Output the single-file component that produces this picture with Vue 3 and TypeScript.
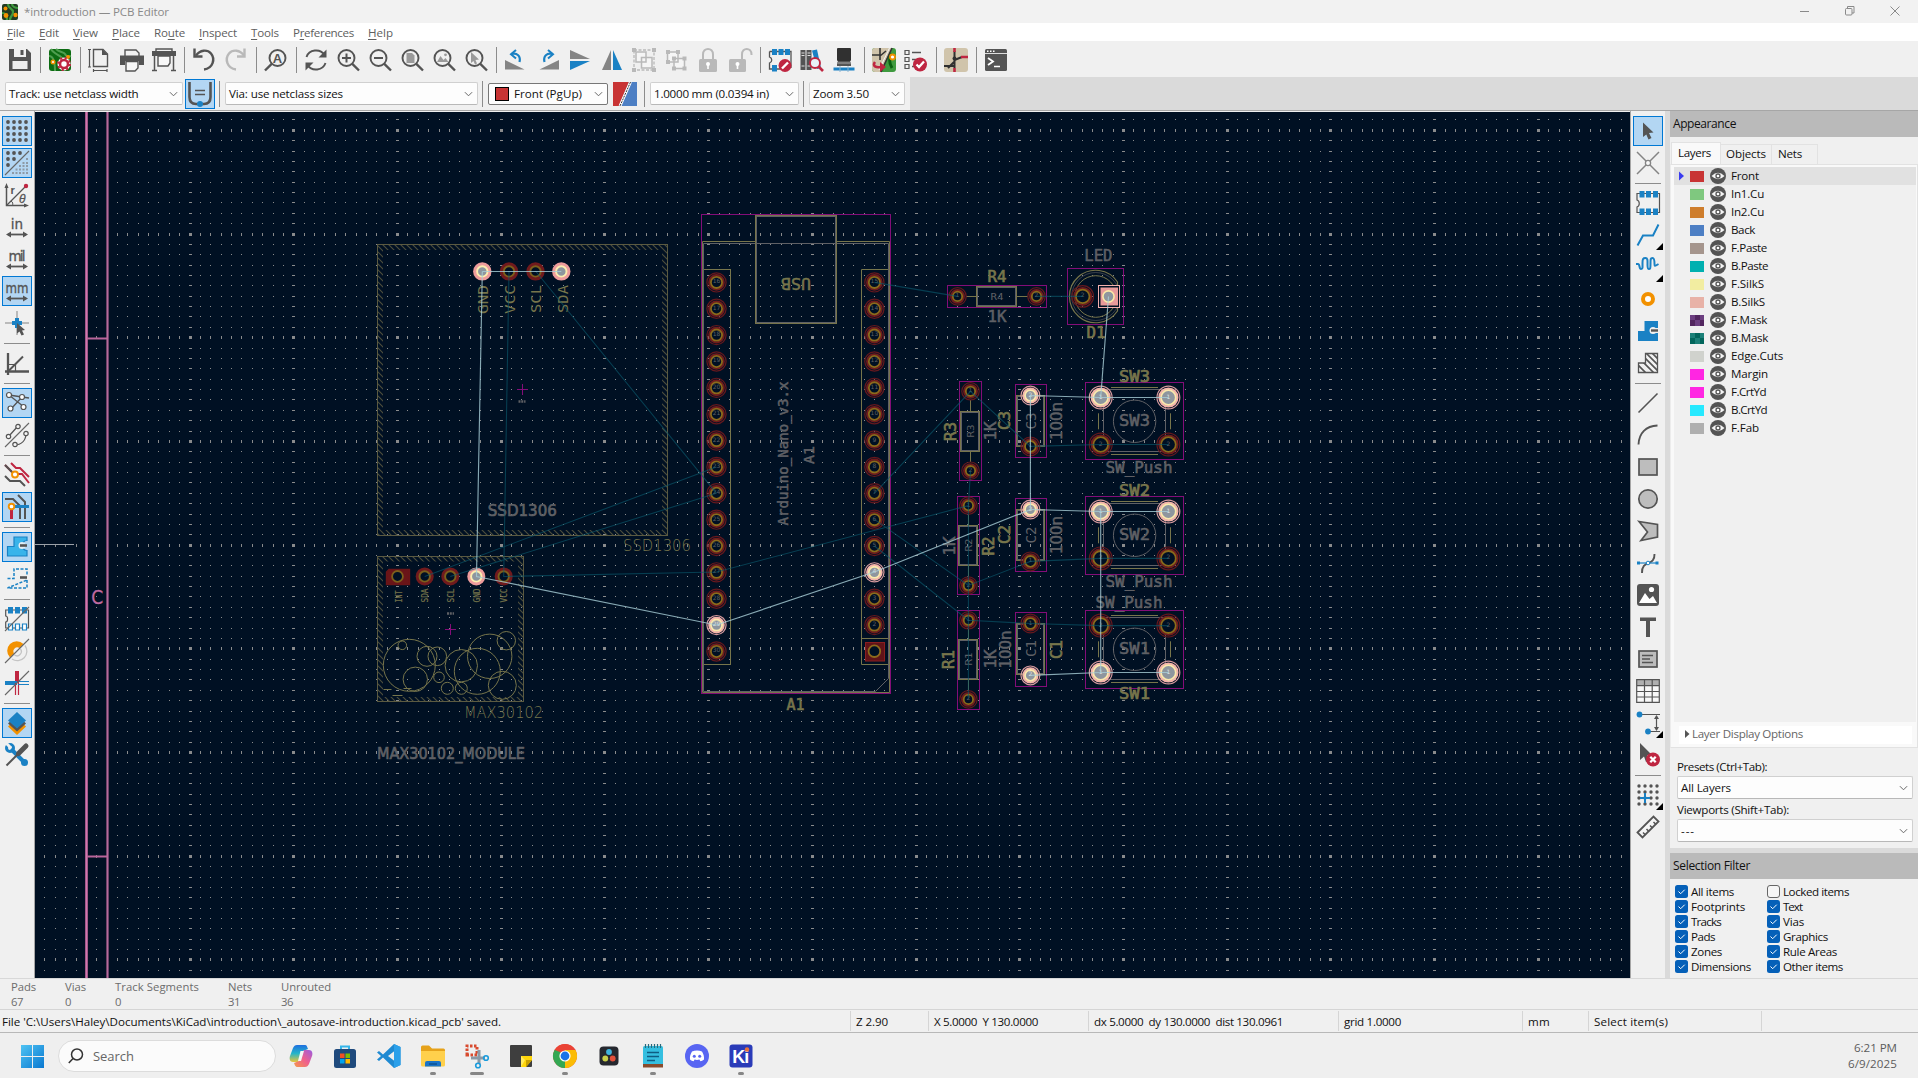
<script setup lang="ts">
import type { Directive } from 'vue'

/* Tracks a label out (or in) so that it fills the given width in pixels. */
const vFit: Directive<HTMLElement, number> = {
  mounted(el, { value }) {
    if (!value) return
    const n = (el.textContent || '').length
    const w = el.getBoundingClientRect().width
    if (n > 1) el.style.letterSpacing = ((value - w) / n).toFixed(3) + 'px'
  },
}

const D = '#545454'
const B = '#1a81c4'
const R = '#bf2641'
const O = '#f29100'
const G = '#b9b9b9'
const ln = (d: string, c = D, w = 2, x = '') => `<path d="${d}" fill="none" stroke="${c}" stroke-width="${w}" ${x}/>`
const fl = (d: string, c = D) => `<path d="${d}" fill="${c}"/>`
const lens = (inner: string) => `<circle cx="10.5" cy="10" r="8" fill="none" stroke="${D}" stroke-width="1.9"/>` + ln('M16.3 15.8L23 22.5', D, 2.4) + inner
const pins = (f: string) => fl('M4 1h5v6h-5zM10.500 1h5v6h-5zM17 1h5v6h-5z', B) + f
const arrowsH = ln('M3 19.500H21', D, 1.800) + fl('M1 19.500l5-3v6zM23 19.500l-5-3v6z')
const slash = ln('M0 24L24 0', '#666', 1.100)

const ic: Record<string, string> = {
  save: fl('M1 1H19L23 5V23H1z') + '<rect x="6" y="1" width="12" height="8" fill="#f0f0f0"/><rect x="12.500" y="2" width="3" height="5" fill="#545454"/><rect x="4.500" y="13" width="15" height="8" fill="#f0f0f0"/>',
  board: '<rect x="1" y="1" width="22" height="22" rx="3" fill="#0c6b12"/>' + ln('M3 1c2 4 8 6 10 8s3 4 9 3M8 1c3 3 8 3 9 5s2 3 6 2M1 8c4 0 6 4 6 15', '#4f9e50', 2) + '<circle cx="5" cy="14" r="2.500" fill="#f29100"/><circle cx="5" cy="14" r="1" fill="#fff"/><circle cx="20" cy="9" r="2" fill="#f29100"/><circle cx="16" cy="16" r="6.500" fill="#fff"/><circle cx="16" cy="16" r="4" fill="none" stroke="#bf2641" stroke-width="2.600"/><circle cx="16" cy="16" r="6" fill="none" stroke="#bf2641" stroke-width="2" stroke-dasharray="2.200 2.500"/>',
  page: ln('M5.500 1.500H15L19.500 6V18.500H5.500z', D, 1.400) + fl('M14 1v6h6z') + ln('M1.500 1.500V19M0 1.500h3M0 19h3M5.500 22.500H19M5.500 21v3M19 21v3', D, 1.200),
  print: ln('M5 9V2H16L19 5V9', D, 1.400, '') + fl('M0 7.500H24V17H19V13H5v4H0z') + '<path d="M6 13.500H18V20l-3 3H6z" fill="#f8f8f8" stroke="#545454" stroke-width="1.400"/>',
  plot: ln('M4 4V1H20V4', D, 1.400) + fl('M0 3H24V8H0z') + ln('M2.500 8V22M21.500 8V22M0 22.500H5M19 22.500h5', D, 1.500) + '<path d="M6 8H18V15l-2 3H6z" fill="#f8f8f8" stroke="#545454" stroke-width="1.400"/>',
  undo: ln('M4 7.500C8 2 15 1 19 5.500C23.500 11 21 20.500 12 21.500', D, 2.400) + ln('M2.500 0.500V8.500H10.500', D, 2.400),
  redo: ln('M20 7.500C16 2 9 1 5 5.500C0.500 11 3 20.500 12 21.500', G, 2.400) + ln('M20.500 0.500V8.500H13', G, 2.400),
  find: '<circle cx="13.500" cy="10" r="8" fill="none" stroke="#545454" stroke-width="1.900"/>' + ln('M7.700 15.800L1 22.500', D, 2.400) + '<text x="13.500" y="14.600" font-size="13" font-weight="bold" text-anchor="middle" font-family="Liberation Sans, sans-serif" fill="#545454">A</text>',
  refresh: ln('M2.500 9C5 1.500 16 0 20.500 7', D, 1.900) + ln('M21.500 15C19 22.500 8 24 3.500 17', D, 1.900) + fl('M22.500 1.500V9.500H14.500zM1.500 22.500V14.500H9.500z'),
  zin: lens(ln('M10.500 5.500V14.500M6 10H15', D, 2)),
  zout: lens(ln('M6 10H15', D, 2)),
  zfit: lens(fl('M6.500 5H12l2.500 2.500V15H6.500z', '#9a9a9a')),
  zobj: lens(fl('M5 14L8.500 8l3 4 2-2 3 4z', '#9a9a9a') + '<circle cx="13.500" cy="6.800" r="1.400" fill="#9a9a9a"/>'),
  zsel: lens(fl('M7 4L15 11.500 11.500 12l1.500 3.500-2 1L9.500 13 7 15z', '#9a9a9a')),
  rccw: fl('M1 12V21.500H20.500z', '#848484') + ln('M7.500 6C13 4.500 17 8 15.500 14', B, 2.200) + ln('M12 2L7 6.300 12 10.500', B, 2),
  rcw: fl('M23 12V21.500H3.500z', '#848484') + ln('M16.500 6C11 4.500 7 8 8.500 14', B, 2.200) + ln('M12 2L17 6.300 12 10.500', B, 2),
  mv: fl('M2 2V11H22z', '#848484') + fl('M2 22V13H22z', B),
  mh: fl('M11 2V22H2z', '#848484') + fl('M13 2V22H22z', B),
  group: ln('M2 2H22V22H2z', G, 1.300, 'stroke-dasharray="3 1.500"') + fl('M0 0h4v4H0zM20 0h4v4h-4zM0 20h4v4H0zM20 20h4v4h-4z', G) + '<path d="M4 4H14V14H4zM9.500 9.500H20V20H9.500z" fill="#f5f5f5" stroke="#b9b9b9" stroke-width="1.500"/>',
  ungroup: '<path d="M3.500 4H14V14H3.500zM10 10.500H20.500V20.500H10z" fill="#f5f5f5" stroke="#b9b9b9" stroke-width="1.500"/>' + fl('M2 2h4v4H2zM12 2h4v4h-4zM2 12h4v4H2zM8 8.500h4v4H8zM18.500 8.500h4v4h-4zM8 18.500h4v4H8zM18.500 18.500h4v4h-4z', G),
  lock: ln('M7 12V6.500C7 -1 17 -1 17 6.500V12', G, 2) + '<rect x="3" y="11" width="18" height="13" rx="1.500" fill="#b9b9b9"/><circle cx="12" cy="16" r="2" fill="#fff"/><rect x="11.200" y="16" width="1.600" height="5" fill="#fff"/>',
  unlock: ln('M14 12V6.500C14 -1 23.500 -1 23.500 6.500V7', G, 2) + '<rect x="1" y="11" width="17" height="13" rx="1.500" fill="#b9b9b9"/><circle cx="9.500" cy="16" r="2" fill="#fff"/><rect x="8.700" y="16" width="1.600" height="5" fill="#fff"/>',
  fped: ln('M1.500 3.500H23V20M1.500 3.500V9c3 1 3 5 0 6v6H12', D, 1.300) + pins(fl('M4 17h5v6.500H4z', B)) + '<circle cx="17" cy="17.500" r="6.500" fill="#bf2641"/>' + ln('M14 20.500L20 14.500', '#fff', 2.400),
  lib: fl('M0.500 2h5v20h-5zM6.500 2h5v20h-5z') + ln('M1.500 5h3M1.500 7.500h3M7.500 5h3M7.500 7.500h3M1.500 18h3M7.500 18h3', '#ddd', 1) + fl('M12 2.500L17 1.500 21 20 17 21z', B) + '<circle cx="15" cy="15" r="5" fill="#e8f2f8" stroke="#bf2641" stroke-width="1.900"/>' + ln('M18.500 18.500L23 23', R, 2.600),
  chip: '<rect x="5" y="0" width="14" height="13" rx="1" fill="#303030"/><path d="M6 13h12l1 2v3H5v-3z" fill="#545454"/><path d="M5 15h14" stroke="#aaa"/><path d="M1.500 19.500h21v3h-21z" fill="#1a81c4"/><path d="M8 18v6M16 18v6" stroke="#8cb4d0" stroke-width="1"/>',
  update: '<rect x="0" y="0" width="24" height="24" rx="3" fill="#3f9a3f"/><path d="M0 3a3 3 0 0 1 3-3H20L8 24H3a3 3 0 0 1-3-3z" fill="#d0c4ab"/>' + ln('M0 7h8M8 0v12M8 8l6-5M20 0L9 24', '#333', 1.600) + ln('M17.500 0L7 22', '#f4f4f4', 1) + '<path d="M20 6c-3 4-3 9 0 14" fill="none" stroke="#0a6010" stroke-width="3"/><circle cx="20.500" cy="9" r="2.500" fill="#fff" stroke="#f29100" stroke-width="1.800"/>' + ln('M3 14c-3 4 1 6 6 5', R, 2.600) + fl('M8 14L14 19 8 24z', R),
  drc: ln('M1 2.500h4v4h-4zM1 9.500h4v4h-4zM1 16.500h4v4h-4z', D, 1.200) + ln('M8 4.500H17M8 11.500H14M8 18.500H10', D, 1.500) + '<circle cx="16" cy="16.500" r="7" fill="#bf2641"/>' + ln('M12.500 16.500L15 19 20 13.500', '#fff', 2.300),
  sch: '<rect x="0" y="0" width="24" height="24" rx="3" fill="#d0c4ab"/>' + ln('M10.500 3V20M0 18H10M10.500 12L18 9M4 20l6-6', '#303030', 2) + ln('M17 9H24M10.500 0V4M10.500 20v4', R, 2.600) + '<circle cx="10.500" cy="10.500" r="2" fill="#303030"/>',
  con: '<rect x="1" y="1" width="22" height="22" rx="1.500" fill="#545454"/><path d="M1 5.500H23" stroke="#ddd" stroke-width="1"/><path d="M3 3.300h1.500M6 3.300h1.500M9 3.300h1.500" stroke="#fff" stroke-width="1.400"/>' + ln('M4 10l5 3.500-5 3.500', '#fff', 1.800) + ln('M10 18.500h6', '#fff', 1.500),
  diff: ln('M1.500 0V15C1.500 20 4 22 8 22H16C20 22 22.500 20 22.500 15V0', D, 2.600) + ln('M7 8.500H17M7 12.500H17', D, 1.300) + '<circle cx="12" cy="22" r="3" fill="#1a81c4"/>',
  pair: '<rect width="24" height="24" fill="#4d7fc4"/><path d="M0 0H16L6 24H0z" fill="#c83434"/>' + ln('M17.500 0L7 24', '#fff', 3) + ln('M17.500 0L7 24', '#333', 1, 'stroke-dasharray="2 1"'),
  grid: [3, 9, 15, 21].map(y => [3, 9, 15, 21].map(x => `<circle cx="${x}" cy="${y}" r="1.900" fill="#545454"/>`).join('')).join(''),
  grid2: [[3, 2], [9, 2], [15, 2], [3, 8], [9, 8], [3, 14]].map(p => `<circle cx="${p[0]}" cy="${p[1]}" r="1.900" fill="#545454"/>`).join('') + slash + fl('M21 7h2v2h-2zM21 11h2v2h-2zM17.500 11h2v2h-2zM21 14h2v2h-2zM17.500 14h2v2h-2zM14 14h2v2h-2zM21 17.500h2v2h-2zM17.500 17.500h2v2h-2zM14 17.500h2v2h-2zM10.500 17.500h2v2h-2zM21 21h2v2h-2zM17.500 21h2v2h-2zM14 21h2v2h-2zM10.500 21h2v2h-2zM7 21h2v2h-2z', '#8e9aa6'),
  polar: ln('M1.500 3V22.500H21', D, 1.500) + fl('M1.500 0L-.5 5h4zM24 22.500l-5-2v4z') + ln('M2 22L20 4', D, 1.200) + ln('M6 18c2 1 2 3 1.500 4.500', D, 1) + '<circle cx="21" cy="3" r="2.200" fill="#bf2641"/><text x="5.500" y="11" font-size="11" font-weight="bold" font-family="Liberation Sans, sans-serif" fill="#545454">r</text><text x="14" y="20" font-size="12" font-style="italic" font-family="Liberation Sans, sans-serif" fill="#545454" stroke="#545454" stroke-width=".3">θ</text>',
  inch: arrowsH + '<text x="12" y="14" font-size="13.500" text-anchor="middle" font-family="DejaVu Sans, sans-serif" fill="#545454" stroke="#545454" stroke-width=".3">in</text>',
  mil: arrowsH + '<text x="12" y="14" font-size="13.500" textLength="17" text-anchor="middle" font-family="DejaVu Sans, sans-serif" fill="#545454" stroke="#545454" stroke-width=".3">mil</text>',
  mm: arrowsH + '<text x="12" y="14" font-size="13.500" textLength="23" lengthAdjust="spacingAndGlyphs" text-anchor="middle" font-family="DejaVu Sans, sans-serif" fill="#545454" stroke="#545454" stroke-width=".3">mm</text>',
  cur: ln('M12 0V24M0 12H24', '#848484', 1) + ln('M12 7V17M7 12H17', B, 4) + fl('M12 12l8 7-3 .5 2 4-2.500 1-2-4-2.500 2z'),
  ang: ln('M3 2V20.500H24M0 20.500h6M3 24V18', D, 2.300) + ln('M3 20.500L18 5.500', D, 2) + ln('M4 13.500H10.500V20', D, 1.200),
  rats: ln('M4 4L17 6 24 7M4 4L19 16M17 6L6 18', D, 1.300) + '<g fill="#fff" stroke="#545454" stroke-width="1.200"><circle cx="4" cy="4" r="2.500"/><circle cx="17" cy="6" r="2.500"/><circle cx="18.500" cy="16" r="2.500"/><circle cx="5.500" cy="17.500" r="2.500"/></g>',
  crats: slash + ln('M4 13L13 3M9 22C17 22 21 17 21 10', D, 1.300) + '<g fill="#f5f5f5" stroke="#545454" stroke-width="1.200"><circle cx="3.500" cy="13.500" r="2.200"/><circle cx="13" cy="3.500" r="2.200"/><circle cx="10" cy="21.500" r="2.200"/><circle cx="21" cy="10.500" r="2.200"/></g>',
  tr1: ln('M6 0L11 5H15L24 14', R, 2) + ln('M0 2L7 9M13 11L17 11 24 20', R, 2) + ln('M0 2L9 11', D, 2) + ln('M0 13L5 18H15L20 23', D, 2) + '<circle cx="10" cy="11.500" r="3" fill="#fff" stroke="#f29100" stroke-width="1.900"/>',
  tr2: ln('M0 4H8L15 11V24M13 0L20 7V24', D, 2) + ln('M9 11.500H24', B, 3) + ln('M6.500 13V24', R, 3) + '<circle cx="6.500" cy="11.500" r="2.800" fill="#fff" stroke="#f29100" stroke-width="1.900"/>',
  zone: '<path d="M2.500 11.500H9V2H22V5.500A5 5 0 1 0 22 15.500V21H2.500z" fill="#39b4ea" stroke="#1a81c4" stroke-width="1.200"/><circle cx="17" cy="10.500" r="3.500" fill="#e2edf5"/>' + ln('M15 10.500H22', D, 2.600),
  zone2: ln('M2.500 11.500H9V2H22V8M22 13V21H2.500z', B, 1.500, 'stroke-dasharray="3 1.500"') + ln('M15 10.500H22', D, 2.600),
  fpo: ln('M.7 3H23.500V21H.7V15c2.500 0 2.500-6 0-6z', D, 1.200) + fl('M3 0h5v6.500H3zM10 0h5v6.500h-5zM17 0h5v6.500h-5z', B) + '<path d="M3.500 17h4v6h-4zM10.500 17h4v6h-4zM17.500 17h4v6h-4z" fill="#fff" stroke="#1a81c4" stroke-width="1.200"/>' + slash,
  viao: '<path d="M5 18.500A9.500 9.500 0 1 1 18.500 5L14.500 9A4 4 0 0 0 9 14.500z" fill="#f29100"/>' + ln('M20 6.500A9.500 9.500 0 0 1 7 20M15.500 10A4.300 4.300 0 0 1 9.500 16', '#c4c4c4', 1.300) + slash,
  tro: ln('M12 0V12', R, 4) + ln('M0 12H12', B, 4) + ln('M10.500 12V24M13.500 12V24', R, 1.200) + ln('M13 10.500H24M13 13.500H24', B, 1.200) + slash,
  layers: fl('M12 7L21 15.500 12 24 3 15.500z', O) + fl('M12 4L21 12.500 12 20.500 3 12.500z') + fl('M12 1L21 9.500 12 17.500 3 9.500z', B),
  tools: ln('M6 6L20 20', B, 4) + '<circle cx="5" cy="5" r="3.500" fill="none" stroke="#1a81c4" stroke-width="3"/><path d="M0 -1L6 5" stroke="#f0f0f0" stroke-width="3"/><circle cx="19.500" cy="19.500" r="3.500" fill="#1a81c4"/>' + ln('M1.500 22.500L14 10', D, 2) + ln('M13.500 10.500L21 3', D, 5, 'stroke-linecap="round"'),
  arrow: fl('M7 3.500L17.500 13.500 13 14l2.500 5-3 1.400L10.300 15.500 7 18z'),
  cross: ln('M1 1L23 23M23 1L1 23', '#848484', 1.500) + '<circle cx="12" cy="12" r="2.600" fill="#f8f8f8" stroke="#848484" stroke-width="1.300"/>',
  fpa: ln('M1 2.500H23.500V21.500H1V16c3-1 3-6 0-7z', D, 1.200) + fl('M3.500 0h5v6.500h-5zM10 0h5v6.500h-5zM17 0h5v6.500h-5zM3.500 17.500h5V24h-5zM10 17.500h5V24h-5zM17 17.500h5V24h-5z', B),
  route: ln('M1.500 22.500L7 12.500H17L22.500 1.500', B, 2),
  tune: ln('M0 9H2C4 9 3 14 5 14S6.500 12 6.500 8 7 3 9.500 3s2 3 2 7 .5 4 1.500 4 1.500 0 1.500-5 0-6 2-6 2 3 2 6 .5 2 4 0', B, 2),
  via: '<circle cx="12" cy="12" r="5" fill="#fff" stroke="#f29100" stroke-width="4"/>',
  zfill: '<path d="M2 12H8.500V2H22V9H17a2.500 2.500 0 0 0 0 5H22V22H2z" fill="#1a81c4"/><circle cx="17" cy="11.500" r="3.500" fill="#f0f0f0"/>' + ln('M15 11.500H22', D, 2.400),
  rule: '<clipPath id="rz"><path d="M2.500 12H9.500V2.500H21.500V21.500H2.500z"/></clipPath><g clip-path="url(#rz)">' + ln('M-4 8L16 28M0 4L20 24M2 0L24 22M6 -2L26 18M10 -4L28 14M-8 12L12 32', D, 1.600) + '</g>' + ln('M2.500 12H9.500V2.500H21.500V21.500H2.500z', D, 1.300),
  line: ln('M2.500 21.500L21.500 2.500', D, 1.600),
  arc: ln('M2.500 21.500C3 10 10 3 21.500 2.500', D, 1.900),
  rect: '<rect x="3" y="4" width="18" height="16" fill="#bdbdbd" stroke="#545454" stroke-width="1.700"/>',
  circ: '<circle cx="12" cy="12" r="9.200" fill="#bdbdbd" stroke="#545454" stroke-width="1.700"/>',
  poly: '<path d="M3 2.500L21.500 5.500V18L5 21.500 11.500 13z" fill="#bdbdbd" stroke="#545454" stroke-width="1.700"/>',
  bez: ln('M18.500 3C19 16 5.500 8 6 22', D, 1.900) + ln('M2 12H22', B, 1.200) + fl('M1 10.500h3v3H1zM19.500 10.500h3v3h-3z', B) + '<circle cx="12" cy="12" r="1.800" fill="#fff" stroke="#1a81c4"/>',
  img: '<rect x="1" y="1" width="22" height="22" rx="3" fill="#545454"/><path d="M3 20L9 10l4.500 6L17 13l4 7z" fill="#fff"/><circle cx="15.500" cy="6.500" r="2.600" fill="#fff"/>',
  text: fl('M4 2.500H20V6H14V22H10V6H4z'),
  tbox: '<rect x="3" y="4" width="18" height="16" fill="#bdbdbd" stroke="#545454" stroke-width="1.700"/>' + ln('M6 8.500H17M6 12H14M6 15.500H17', D, 1.300),
  table: '<rect x=".7" y=".7" width="22.600" height="22.600" fill="#f8f8f8"/><rect x=".7" y=".7" width="22.600" height="6" fill="#b0b0b0"/>' + ln('M.7.7H23.300V23.300H.7zM.7 6.700H23.300M.7 12.500H23.300M.7 18H23.300M8.500.7V23.300M16.200.7V23.300', D, 1.200),
  dim: ln('M4 3.500H24M12 20.500H24', D, 1.200) + ln('M20.500 5V19', D, 1.200) + fl('M20.500 4l2.500 4h-5zM20.500 20l2.500-4h-5z') + '<circle cx="3.500" cy="3.500" r="2.900" fill="#1a81c4"/><circle cx="12" cy="20.500" r="2.900" fill="#1a81c4"/>',
  del: fl('M4 0L16 12 11 12.500 13 18 10 19 8 13.500 4 17z') + '<circle cx="17" cy="16.500" r="7" fill="#bf2641"/>' + ln('M14.300 13.800L19.700 19.200M19.700 13.800L14.300 19.200', '#fff', 2.300),
  gorg: [3, 9, 15, 21].map(y => [3, 9, 15, 21].map(x => `<circle cx="${x}" cy="${y}" r="1.700" fill="#545454"/>`).join('')).join('') + ln('M9 10V20M4 15H14', B, 2),
  ruler: '<path d="M1.500 17.500L17.500 1.500 22.500 6.500 6.500 22.500z" fill="#f5f5f5" stroke="#545454" stroke-width="1.800"/>' + ln('M9.500 20l-2.500-2.500M13 16.500l-2.500-2.500M16.500 13L14 10.500M20 9.500L17.500 7', D, 1.500),
}

const topGroups: string[][] = [
  ['save'], ['board'], ['page', 'print', 'plot'], ['undo', 'redo'], ['find'],
  ['refresh', 'zin', 'zout', 'zfit', 'zobj', 'zsel'],
  ['rccw', 'rcw', 'mv', 'mh', 'group', 'ungroup', 'lock', 'unlock'],
  ['fped', 'lib', 'chip'], ['update', 'drc'], ['sch'], ['con'],
]
const leftBar = ['*grid', '*grid2', 'polar', 'inch', 'mil', '*mm', 'cur', '-', 'ang', '-', '*rats', 'crats', '-', 'tr1', '*tr2', '-', '*zone', 'zone2', '-', 'fpo', 'viao', 'tro', '-', '*layers', 'tools']
const rightBar = ['*arrow', 'cross', '-', 'fpa', 'route+', 'tune+', 'via', 'zfill', 'rule', '-', 'line', 'arc', 'rect', 'circ', 'poly', 'bez', 'img', 'text', 'tbox', 'table', 'dim+', 'del', '-', 'gorg+', 'ruler']
const key = (s: string) => s.replace(/[*+]/g, '')

const menus: [string, string, string, number][] = [
  ['', 'F', 'ile', 18], ['', 'E', 'dit', 20], ['', 'V', 'iew', 25], ['', 'P', 'lace', 28], ['Ro', 'u', 'te', 31],
  ['', 'I', 'nspect', 38], ['', 'T', 'ools', 28], ['P', 'r', 'eferences', 61], ['', 'H', 'elp', 25],
]
const layers: [string, string, string?, number?][] = [
  ['Front', '#c83434', '', 28], ['In1.Cu', '#7fc87f', '', 33], ['In2.Cu', '#ce7d2c', '', 33], ['Back', '#4d7fc4', '', 24],
  ['F.Paste', '#a5958d', '', 36], ['B.Paste', '#00b0b0', '', 37], ['F.SilkS', '#f2eda1', '', 33], ['B.SilkS', '#e8b2a7', '', 34],
  ['F.Mask', '#6c3f80', '#52265f', 36], ['B.Mask', '#1b8078', '#02665c', 37], ['Edge.Cuts', '#d0d2cd', '', 52], ['Margin', '#ff26e2', '', 37],
  ['F.CrtYd', '#ff26e2', '', 35], ['B.CrtYd', '#26e9ff', '', 36], ['F.Fab', '#afafaf', '', 28],
]
const filters: [string, number, boolean][][] = [
  [['All items', 43, true], ['Footprints', 54, true], ['Tracks', 30, true], ['Pads', 24, true], ['Zones', 31, true], ['Dimensions', 60, true]],
  [['Locked items', 66, false], ['Text', 19, true], ['Vias', 21, true], ['Graphics', 45, true], ['Rule Areas', 54, true], ['Other items', 60, true]],
]
const stats: [string, string, number, number][] = [['Pads', '67', 25, 54], ['Vias', '0', 21, 50], ['Track Segments', '0', 84, 113], ['Nets', '31', 24, 53], ['Unrouted', '36', 50, 60]]
const status: [string, number, number][] = [
  ["File 'C:\\Users\\Haley\\Documents\\KiCad\\introduction\\_autosave-introduction.kicad_pcb' saved.", 499, 851],
  ['Z 2.90', 32, 78], ['X 5.0000  Y 130.0000', 104, 160], ['dx 5.0000  dy 130.0000  dist 130.0961', 189, 250],
  ['grid 1.0000', 57, 184], ['mm', 22, 66], ['Select item(s)', 74, 173],
]

/* ---------- board ---------- */
const P = 10.371
const gx: [number, boolean][] = []
const gy: [number, boolean][] = []
for (let i = -6; i < 150; i++) gx.push([Math.floor(86.4 + i * P), i % 10 === 0])
for (let i = -2; i < 85; i++) gy.push([Math.floor(130.3 + i * P), i % 10 === 0])
const gridPath = gy.map(([y, my]) => gx.map(([x, mx]) => {
  const w = mx ? 3 : 1
  const h = my ? 3 : 1
  return `M${mx ? x - 1 : x} ${my ? y - 1 : y}h${w}v${h}h-${w}z`
}).join('')).join('')

const silk = '#77754b'
const fab = '#5f6065'
const pinY = Array.from({ length: 15 }, (_, i) => 282.4 + i * 26.36)

type Pad = { x: number; y: number; r: number; k: number; on?: boolean; n?: string }
const pads: Pad[] = [
  ...[482.3, 509, 535.5, 561.3].map((x, i) => ({ x, y: 271.4, r: 9.2, k: 0, on: i === 0 || i === 3, n: '' })),
  ...[424.7, 450.3, 476.3, 503.7].map((x, i) => ({ x, y: 576.4, r: 9, k: 0, on: i === 2, n: '' })),
  ...pinY.map((y, i) => ({ x: 716.5, y, r: 9.6, k: 1, on: i === 13, n: String(16 + i) })),
  ...pinY.slice(0, 14).map((y, i) => ({ x: 874.4, y, r: 9.6, k: 1, on: i === 11, n: String(15 - i) })),
  ...([[957.5, 296.4], [1036.5, 296.4], [970.5, 391.3], [970.5, 470.7], [968.4, 505.6], [968.4, 585.5], [968.4, 620.3], [968.4, 699.4]] as [number, number][]).map(([x, y], i) => ({ x, y, r: 8.7, k: 1, n: i % 2 ? '2' : '1' })),
  ...([[395.5, 1], [446.4, 0], [509.5, 1], [561.4, 0], [623.5, 0], [675.4, 1]] as [number, number][]).map(([y, o]) => ({ x: 1030.4, y, r: 9.4, k: 1, on: !!o, n: o ? '2' : '1' })),
  { x: 1082.7, y: 296.4, r: 10.8, k: 1, n: '2' },
  ...([[397.5, 1], [444.5, 0], [511.5, 1], [558.4, 0], [625.6, 0], [672.5, 1]] as [number, number][]).flatMap(([y, o]) => [1100.7, 1168.4].map(x => ({ x, y, r: 11.4, k: 1, on: !!o, n: o ? '1' : '2' }))),
]
const white = ['M482.300 271.500H561.300M482.300 271.500L476.500 576.500L716.500 625L874.400 572L1030.400 509.500V395.500L1100.700 397.500H1168.400M1108.500 296.500L1100.700 397.500', 'M1030.400 509.500L1100.700 511.500H1168.400M1100.700 511.500V672.500H1168.400M1030.400 675.400L1100.700 672.500']
const dim = 'M509 271L503.700 576.500L716.500 572L968.400 505.600M535.500 271L716.500 493.300M424.700 576.500L716.500 467M450.300 576.500L716.500 493.300M874.400 282.400L957.500 296.400M874.400 493.300L970.500 391.300L1030.400 446.400L1100.700 444.500H1168.400M970.500 470.700L968.400 505.600V699M874.400 519.400L968.400 585.500L1030.400 561.400L1100.700 558.400H1168.400M874.400 546L968.400 620.300L1030.400 623.500L1100.700 625.600H1168.400M1036.500 296.400H1082.700'
const circles = [[409.3, 665.3, 26], [402.3, 645.3, 4.3], [427, 656.3, 10], [437.3, 656.3, 9.3], [415.3, 679.3, 12.2], [439, 677.3, 5.3], [447.3, 688.3, 6], [461.3, 688.3, 6], [461.3, 665.7, 16.2], [477.3, 671.3, 23], [489.7, 656.3, 22.2], [506.3, 640.7, 9.2], [502.3, 685.3, 14]]
const courts = [[701.5, 214.5, 189, 479], [947.5, 285.5, 99, 22], [959.5, 381.5, 22, 99], [957.5, 496.5, 22, 98], [957.5, 610.5, 22, 99], [1015.5, 384.5, 31, 73], [1015.5, 498.5, 31, 73], [1015.5, 612.5, 31, 74], [1067.5, 268.5, 56, 56], [1085.5, 382.5, 98, 77], [1085.5, 496.5, 98, 78], [1085.5, 610.5, 98, 78]]
const bodies = [[977, 287, 39, 19], [961, 412, 18, 39], [959, 526, 18, 39], [959, 640, 18, 39], [1017, 396, 27, 50], [1017, 510, 27, 50], [1017, 624, 27, 50], [756, 216, 80, 107]]
const sws = [421.3, 535.3, 649.3]

type L = [string, number, number, number, number, number, string, number]
/* text, centre x, centre y, length, cap height, rotation, colour, stroke width */
const labels: L[] = [
  ['GND', 482.5, 299.5, 29, 10.5, -90, silk, 0], ['VCC', 509.5, 299.5, 29, 10.5, -90, silk, 0], ['SCL', 535.8, 299, 28, 10.5, -90, silk, 0], ['SDA', 562.5, 299, 28, 10.5, -90, silk, 0],
  ['INT', 398.5, 596.5, 12, 6.5, -90, silk, 0.3], ['SDA', 424.5, 595.5, 14, 6.5, -90, silk, 0.3], ['SCL', 451, 595.5, 14, 6.5, -90, silk, 0.3], ['GND', 477, 595.5, 14, 6.5, -90, silk, 0.3], ['VCC', 504, 595.5, 14, 6.5, -90, silk, 0.3],
  ['SSD1306', 657, 545.3, 68, 11.5, 0, silk, 0], ['MAX30102', 503.5, 712.3, 79, 11.5, 0, silk, 0],
  ['SSD1306', 522.3, 510, 69, 11, 0, fab, 1], ['MAX30102_MODULE', 451, 753.8, 148, 11, 0, fab, 1],
  ['USB', 796, 283.3, 30, 11, 180, silk, 0.7], ['A1', 795.5, 704.5, 18, 11.5, 0, silk, 1],
  ['Arduino_Nano_v3.x', 783, 453.5, 144, 10.5, -90, fab, 0.8], ['A1', 809, 455, 18, 10.5, -90, fab, 0.8],
  ['R4', 997, 276.3, 19, 11, 0, silk, 1], ['1K', 997, 316.3, 19, 11, 0, fab, 0.8], ['R4', 997, 296.5, 13, 7, 0, fab, 0],
  ['R3', 950.3, 431.5, 19, 11, -90, silk, 1], ['1K', 990.3, 431, 19, 11, -90, fab, 0.8], ['R3', 970, 431, 13, 7, -90, fab, 0],
  ['1K', 949, 546, 19, 11, -90, fab, 0.8], ['R2', 988.5, 546, 19, 11, -90, silk, 1], ['R2', 968.5, 545, 13, 7, -90, fab, 0],
  ['R1', 948.5, 659.5, 19, 11, -90, silk, 1], ['1K', 990.3, 659, 19, 11, -90, fab, 0.8], ['R1', 968.5, 659, 13, 7, -90, fab, 0],
  ['100n', 1005, 649.5, 38, 11, -90, fab, 0.7], ['C1', 1056.5, 649.5, 19, 11, -90, silk, 1], ['C1', 1030.5, 648.5, 17, 10, -90, fab, 0],
  ['C3', 1004.5, 420.5, 19, 11, -90, silk, 1], ['100n', 1056.5, 421, 38, 11, -90, fab, 0.7], ['C3', 1030.5, 421, 17, 10, -90, fab, 0],
  ['C2', 1004.5, 534.5, 19, 11, -90, silk, 1], ['100n', 1056.5, 535, 38, 11, -90, fab, 0.7], ['C2', 1030.5, 535, 17, 10, -90, fab, 0],
  ['LED', 1098.3, 255, 28, 11, 0, fab, 0.8], ['D1', 1096, 332.5, 19, 11, 0, silk, 1],
  ['SW3', 1134.5, 376.8, 31, 11, 0, silk, 1], ['SW3', 1134.5, 420.7, 31, 11, 0, fab, 0.8], ['SW_Push', 1139, 467.3, 67, 11, 0, fab, 0.8],
  ['SW2', 1134.5, 490.8, 31, 11, 0, silk, 1], ['SW2', 1134.5, 534.7, 31, 11, 0, fab, 0.8], ['SW_Push', 1139, 581.5, 67, 11, 0, fab, 0.8],
  ['SW1', 1134.5, 693.3, 31, 11, 0, silk, 1], ['SW1', 1134.5, 648.7, 31, 11, 0, fab, 0.8], ['SW_Push', 1129, 602.8, 67, 11, 0, fab, 0.8],
]
/* The monospaced face has a dotted zero, so labels with a 0 keep the proportional one. */
const face = (s: string) => (s.includes('0') ? 'DejaVu Sans, sans-serif' : 'DejaVu Sans Mono, monospace')

/* ---------- taskbar ---------- */
const tasks: { d: number; s: string }[] = [
  { d: 0, s: '<defs><linearGradient id="cp1" x1="0" y1="0" x2="0" y2="1"><stop offset="0" stop-color="#1e6fe0"/><stop offset=".5" stop-color="#25b5c9"/><stop offset="1" stop-color="#e8c53a"/></linearGradient><linearGradient id="cp2" x1="1" y1="0" x2="0" y2="1"><stop offset="0" stop-color="#9a5be0"/><stop offset=".5" stop-color="#ef5f8d"/><stop offset="1" stop-color="#f59a4a"/></linearGradient></defs><path d="M8 1h8c2 0 2 2 3 4l-5 2c-2 1-3 9-5 11H4c-3 0-4-3-3-6l3-8c1-2 2-3 4-3z" fill="url(#cp1)"/><path d="M16 23H9c-3 0-3-2-4-4l5-2c2-1 3-9 5-11h5c3 0 4 3 3 6l-3 8c-1 2-2 3-4 3z" fill="url(#cp2)"/><path d="M11.500 7h3.500l-3 10H9z" fill="#f4f4f4"/>' },
  { d: 0, s: '<path d="M8 6V2.500h8V6" fill="none" stroke="#35b5ea" stroke-width="2"/><rect x="1" y="5" width="22" height="19" rx="2.500" fill="#1f4a7d"/><path d="M7 9.500h4.500V14H7z" fill="#f25022"/><path d="M12.500 9.500H17V14h-4.500z" fill="#7fba00"/><path d="M7 15h4.500v4.500H7z" fill="#00a4ef"/><path d="M12.500 15H17v4.500h-4.500z" fill="#ffb900"/>' },
  { d: 0, s: '<path d="M17 0l6.500 3v18L17 24 6 13.500 2 17l-2-1.500L4 12 0 8.500 2 7l4 3.500z" fill="#1f8ad2"/><path d="M17.500 7v10L11 12z" fill="#eee"/><path d="M17 0l6.500 3v18L17 24z" fill="#2ba0ea"/>' },
  { d: 1, s: '<path d="M0 3a1.500 1.500 0 0 1 1.500-1.500H8l3 3h11.500A1.500 1.500 0 0 1 24 6v15H0z" fill="#e6a21a"/><path d="M0 7H24V21a1.500 1.500 0 0 1-1.500 1.500h-21A1.500 1.500 0 0 1 0 21z" fill="#ffd04c"/><path d="M4 22.500V19a2 2 0 0 1 2-2H18a2 2 0 0 1 2 2v3.500z" fill="#1a74c8"/><path d="M8 20h8" stroke="#0d5292" stroke-width="1.500"/>' },
  { d: 2, s: '<path d="M2 11V2H12V11z" fill="none" stroke="#d84a2e" stroke-width="3" stroke-dasharray="2.500 1.500"/><path d="M14 6V20M6 14H20" stroke="#8a99a6" stroke-width="3"/><circle cx="21" cy="14" r="2.300" fill="none" stroke="#1a9bdc" stroke-width="1.600"/><circle cx="13" cy="21.500" r="2.300" fill="none" stroke="#1a9bdc" stroke-width="1.600"/>' },
  { d: 0, s: '<rect x="1" y="1" width="22" height="22" rx="1" fill="#3e3e3e"/><path d="M12 12H23V16L17 23H12z" fill="#ffd60a"/><path d="M12 23V12l4 4z" fill="#ffea61"/><path d="M23 16L17 23V16z" fill="#c99f00"/>' },
  { d: 1, s: '<circle cx="12" cy="12" r="12" fill="#ea4335"/><path d="M12 12L1.600 6A12 12 0 0 0 12 24z" fill="#34a853"/><path d="M12 12V24A12 12 0 0 0 22.400 6H12z" fill="#fbbc05"/><path d="M1.600 6A12 12 0 0 1 22.400 6H12z" fill="#ea4335"/><path d="M1.600 6L7 15l5 -1V6z" fill="#34a853"/><path d="M1.800 6H12v4z" fill="#ea4335"/><circle cx="12" cy="12" r="5.600" fill="#fff"/><circle cx="12" cy="12" r="4.400" fill="#1a73e8"/>' },
  { d: 0, s: '<rect x="2.500" y="2.500" width="19" height="19" rx="4" fill="#26282f"/><circle cx="12" cy="8" r="2.900" fill="#3fb4dd"/><circle cx="8.300" cy="14.500" r="2.900" fill="#c9cf4a"/><circle cx="15.700" cy="14.500" r="2.900" fill="#e2503b"/>' },
  { d: 1, s: '<rect x="2" y="2" width="20" height="21" rx="1.500" fill="#35bfe0"/><path d="M2 20H22V23.500H2z" fill="#8a4b2c"/><path d="M4.500 0V4M7.500 0V4M10.500 0V4M13.500 0V4M16.500 0V4M19.500 0V4" stroke="#2a6a7c" stroke-width="1.200"/><path d="M6 8.500H18M6 12.500H18M6 16.500H14" stroke="#0f5d82" stroke-width="1.500"/>' },
  { d: 0, s: '<circle cx="12" cy="12" r="12" fill="#5865f2"/><path d="M7 7.500c3-1.300 7-1.300 10 0 1.500 2.500 2.300 5 2 8-1.200 1-2.500 1.500-3.600 1.700l-1-1.600c-1.600.4-3.200.4-4.800 0l-1 1.600C7.500 17 6.200 16.500 5 15.500c-.3-3 .5-5.500 2-8z" fill="#fff"/><circle cx="9.300" cy="12.300" r="1.500" fill="#5865f2"/><circle cx="14.700" cy="12.300" r="1.500" fill="#5865f2"/>' },
  { d: 1, s: '<rect x="0.500" y="0.500" width="23" height="23" rx="3" fill="#2a3bb8"/><text x="11.800" y="18.500" font-size="18" font-weight="bold" text-anchor="middle" textLength="17" font-family="Liberation Sans, sans-serif" fill="#fff">Ki</text><circle cx="18" cy="5.500" r="2.200" fill="#e8703a"/>' },
]
</script>

<template>
  <div class="app">
    <header class="title">
      <svg width="16" height="16" viewBox="0 0 16 16"><rect width="16" height="16" rx="2" fill="#223b22" /><path d="M6 0c0 5 5 4 5 8s-3 4-3 8M10 0c0 3 4 4 6 4M0 9c3 0 5 2 5 7" fill="none" stroke="#3f9a3f" stroke-width="2.200" /><circle cx="3.500" cy="4.500" r="2" fill="#f29100" /><circle cx="4" cy="11.500" r="2.400" fill="#f29100" /><circle cx="13.500" cy="11" r="2.200" fill="#f29100" /></svg>
      <span v-fit="145">*introduction — PCB Editor</span>
      <div class="win">
        <svg width="100" height="12" viewBox="0 0 100 12" fill="none" stroke="#8a8a8a"><path d="M0 5.500H9" /><rect x="45.500" y="2.500" width="6.500" height="6.500" rx="1" /><path d="M47.500 2.500V.5H54V7H52M90.500 .5l9 9M99.500 .5l-9 9" /></svg>
      </div>
    </header>
    <nav class="menu"><span v-for="m in menus" :key="m[2]" v-fit="m[3]">{{ m[0] }}<u>{{ m[1] }}</u>{{ m[2] }}</span></nav>

    <div class="tb1">
      <template v-for="(g, gi) in topGroups" :key="gi">
        <i v-if="gi" class="sep" />
        <span v-for="k in g" :key="k" class="slot"><svg width="24" height="24" viewBox="0 0 24 24" v-html="ic[k]" /></span>
      </template>
    </div>

    <div class="tb2">
      <div class="tools">
        <div class="combo c1"><span v-fit="129.500">Track: use netclass width</span><svg class="chev" viewBox="0 0 10 6"><path d="M1 1l4 4 4-4" /></svg></div>
        <span class="act"><svg width="24" height="24" viewBox="0 0 24 24" v-html="ic.diff" /></span>
        <i class="vs s1" />
        <div class="combo c2"><span v-fit="114">Via: use netclass sizes</span><svg class="chev" viewBox="0 0 10 6"><path d="M1 1l4 4 4-4" /></svg></div>
        <i class="vs s2" />
        <div class="combo c3"><b class="sw" /><span v-fit="68">Front (PgUp)</span><svg class="chev" viewBox="0 0 10 6"><path d="M1 1l4 4 4-4" /></svg></div>
        <svg class="pair" width="24" height="24" viewBox="0 0 24 24" v-html="ic.pair" />
        <i class="vs s3" />
        <div class="combo c4"><span v-fit="115">1.0000 mm (0.0394 in)</span><svg class="chev" viewBox="0 0 10 6"><path d="M1 1l4 4 4-4" /></svg></div>
        <i class="vs s4" />
        <div class="combo c5"><span v-fit="56">Zoom 3.50</span><svg class="chev" viewBox="0 0 10 6"><path d="M1 1l4 4 4-4" /></svg></div>
      </div>
    </div>

    <main class="mid">
      <aside class="bar left">
        <template v-for="(k, i) in leftBar" :key="i">
          <i v-if="k === '-'" class="hs" />
          <span v-else class="cell" :class="{ active: k[0] === '*' }"><svg width="24" height="24" viewBox="0 0 24 24" v-html="ic[key(k)]" /></span>
        </template>
      </aside>

      <svg class="board" width="1595" height="866" viewBox="35 112 1595 866">
        <defs>
          <pattern id="hatch" width="6" height="6" patternUnits="userSpaceOnUse"><path d="M-1 -1L7 7M-1 5L1 7M5 -1L7 1" stroke="#4d4e3c" stroke-width="1.100" /></pattern>
        </defs>
        <rect x="35" y="112" width="1595" height="866" fill="#001023" />
        <path :d="gridPath" fill="#8a8b8c" shape-rendering="crispEdges" />
        <g fill="none">
          <path d="M86.500 112V978" stroke-width="3" stroke="#a3588a" /><path d="M86.500 112V978" stroke="#cf79ae" />
          <path d="M107.500 112V978" stroke-width="3" stroke="#6e4269" /><path d="M107.500 112V978" stroke="#b56b9c" />
          <path d="M87 338.500H107M87 856.500H107" stroke-width="2" stroke="#b9659a" />
        </g>
        <text x="97.200" y="603.500" font-size="19" text-anchor="middle" textLength="12" lengthAdjust="spacingAndGlyphs" fill="#c06aa0" stroke="#c06aa0" stroke-width=".3">C</text>
        <path d="M35 544.500H74" stroke="#9aa0a8" />

        <path d="M377.500 244.500H667.500V535.500H377.500zM383 250V530H662V250z" fill="url(#hatch)" fill-rule="evenodd" />
        <path d="M377.500 556.500H523.500V701.500H377.500zM383 561.500V697H518V561.500z" fill="url(#hatch)" fill-rule="evenodd" />
        <g fill="none" stroke="#5b5a41"><rect x="377.500" y="244.500" width="290" height="291" /><rect x="377.500" y="556.500" width="146" height="145" /></g>
        <g fill="none" stroke="#77754b"><circle v-for="(c, i) in circles" :key="i" :cx="c[0]" :cy="c[1]" :r="c[2]" /><path d="M383.500 689.500h8M403.500 688.500h8M392.500 695.500h10" /></g>
        <path d="M517 389.500h11M522.500 384v11M445 629.500h11M450.500 624v11" stroke="#830d78" />
        <path d="M518.500 401.500h7M447 613.500h7" stroke="#5f6065" stroke-width="2.500" stroke-dasharray="2 .8" />

        <g fill="none" stroke="#77754b">
          <path d="M755 241.500H702.500V692.500H889.500V241.500H837" /><rect x="703.500" y="269.500" width="27" height="395" /><path d="M889 269.500H861.500V664.500H889M861.500 638.500H889" />
        </g>
        <path d="M703.500 243.500H888.500V678.500L875.500 691.500H703.500z" fill="none" stroke="#5f6065" />
        <g fill="none" stroke="#830d78"><rect v-for="(c, i) in courts" :key="i" :x="c[0]" :y="c[1]" :width="c[2]" :height="c[3]" /></g>
        <g fill="none"><template v-for="(c, i) in bodies" :key="i"><rect :x="c[0] - .5" :y="c[1] - .5" :width="c[2] + 1" :height="c[3] + 1" stroke="#77754b" /><rect :x="c[0] + .5" :y="c[1] + .5" :width="c[2] - 1" :height="c[3] - 1" stroke="#5f6065" /></template></g>
        <path d="M966 296.500H977M1017 296.500H1028M970.500 400V411M970.500 451V462M968.500 514V525M968.500 565V577M968.500 629V639M968.500 679V691" stroke="#77754b" />
        <g fill="none" stroke="#77754b"><path d="M1117.500 282A26.200 26.200 0 1 0 1117.500 311z" stroke-width="1.200" /><circle cx="1095.700" cy="296.500" r="20.800" /><circle cx="1095.700" cy="296.500" r="24" stroke="#5f6065" stroke-width=".6" /></g>
        <g v-for="y in sws" :key="y" fill="none">
          <path :d="`M1111 ${y - 33.800}h47M1111 ${y + 33.200}h47M1098.500 ${y - 8}v16M1170.500 ${y - 8}v16`" stroke="#77754b" />
          <rect x="1103.500" :y="y - 31.800" width="62" height="62" stroke="#5f6065" /><circle cx="1134.600" :cy="y" r="21.200" stroke="#5f6065" />
        </g>

        <path d="M389 569.500H409.500V584.500H386.500V572z" fill="#6a1518" stroke="#6a1518" stroke-width="1.400" />
        <circle cx="397.500" cy="576.400" r="5.400" fill="#001023" stroke="#7c5f1c" stroke-width="1.800" />
        <rect x="865.500" y="642.500" width="19" height="18.500" fill="#601318" stroke="#8a1e20" />
        <circle cx="874.400" cy="651.200" r="5.800" fill="#001023" stroke="#8c6a1c" stroke-width="1.800" />
        <rect x="1098.500" y="285.500" width="21" height="22" fill="#001023" stroke="#f3b0ae" /><rect x="1100.500" y="287.500" width="17.500" height="18" fill="#e89a9a" />
        <circle cx="1108.500" cy="296.500" r="5.600" fill="#8e969e" stroke="#fbe9a8" stroke-width="1.600" />
        <g v-for="(p, i) in pads" :key="'p' + i">
          <template v-if="p.k === 0">
            <circle :cx="p.x" :cy="p.y" :r="p.r" :fill="p.on ? '#ee9c9c' : '#711a1d'" />
            <circle :cx="p.x" :cy="p.y" r="5.200" :fill="p.on ? '#8e969e' : '#001023'" :stroke="p.on ? '#fdeeb0' : '#7c5f1c'" stroke-width="1.900" />
          </template>
          <template v-else>
            <circle :cx="p.x" :cy="p.y" :r="p.r" fill="none" :stroke="p.on ? '#d59a9f' : '#64181e'" stroke-width="1.200" />
            <circle :cx="p.x" :cy="p.y" :r="p.r - 2.300" :fill="p.on ? '#8e969e' : '#001023'" :stroke="p.on ? '#f7b3ab' : '#701b1c'" stroke-width="2" />
            <circle :cx="p.x" :cy="p.y" :r="p.r - 4" fill="none" :stroke="p.on ? '#fbe8ad' : '#8c6a1c'" stroke-width="1.800" />
          </template>
          <text v-if="p.n" :x="p.x" :y="p.y + 1" font-size="6" text-anchor="middle" :fill="p.on ? '#e0e2e4' : '#5f6065'">{{ p.n }}</text>
        </g>

        <g><text v-for="(l, i) in labels" :key="'l' + i" :x="l[1]" :y="l[2] + l[4] / 2" :transform="`rotate(${l[5]} ${l[1]} ${l[2]})`" :font-family="face(l[0])" :font-weight="l[7] ? 400 : 200" :font-size="l[4] / .73" text-anchor="middle" :textLength="l[3]" lengthAdjust="spacingAndGlyphs" :fill="l[6]" :stroke="l[6]" :stroke-width="l[7] * .65">{{ l[0] }}</text></g>
        <path :d="dim" fill="none" stroke="#0a5a6e" stroke-opacity=".62" stroke-width="1.100" />
        <path v-for="w in white" :key="w" :d="w" fill="none" stroke="#a9d0d8" stroke-opacity=".8" stroke-width="1.150" />
      </svg>

      <aside class="bar right">
        <template v-for="(k, i) in rightBar" :key="i">
          <i v-if="k === '-'" class="hs" />
          <span v-else class="cell" :class="{ active: k[0] === '*', sub: k.endsWith('+') }"><svg width="24" height="24" viewBox="0 0 24 24" v-html="ic[key(k)]" /></span>
        </template>
      </aside>

      <aside class="panel">
        <h2><span v-fit="63">Appearance</span></h2>
        <div class="tabs"><span class="tab on"><em v-fit="33">Layers</em></span><span class="tab t2"><em v-fit="40">Objects</em></span><span class="tab t3"><em v-fit="24">Nets</em></span></div>
        <div class="box">
          <ul>
            <li v-for="(l, i) in layers" :key="l[0]" :class="{ sel: i === 0 }">
              <svg width="16" height="10" viewBox="0 0 16 10"><path v-if="i === 0" d="M5 .5V9.500L10 5z" fill="#3a3cf0" /></svg>
              <svg class="swatch" width="14" height="11" viewBox="0 0 14 11"><rect width="14" height="11" :fill="l[1]" /><path v-if="l[2]" d="M5 0h5v5H5zM0 5h5v6H0zM10 5h4v6h-4z" :fill="l[2]" /></svg>
              <svg width="16" height="16" viewBox="0 0 16 16"><circle cx="8" cy="8" r="8" fill="#545454" /><path d="M1.500 8Q8 1.500 14.500 8Q8 14.500 1.500 8z" fill="#f4f4f4" /><circle cx="8" cy="8" r="2" fill="#fff" stroke="#545454" stroke-width="1.300" /></svg>
              <span v-fit="l[3]!">{{ l[0] }}</span>
            </li>
          </ul>
          <div class="ldo"><svg width="5" height="8" viewBox="0 0 5 8"><path d="M0 0L4.500 4 0 8z" fill="#555" /></svg><span v-fit="111">Layer Display Options</span></div>
        </div>
        <div class="presets">
          <label><span v-fit="90">Presets (Ctrl+Tab):</span></label>
          <div class="combo pc"><span v-fit="50">All Layers</span><svg class="chev" viewBox="0 0 10 6"><path d="M1 1l4 4 4-4" /></svg></div>
          <label class="l2"><span v-fit="112">Viewports (Shift+Tab):</span></label>
          <div class="combo pc"><span v-fit="14">---</span><svg class="chev" viewBox="0 0 10 6"><path d="M1 1l4 4 4-4" /></svg></div>
        </div>
        <h2 class="h2b"><span v-fit="77">Selection Filter</span></h2>
        <div class="filters">
          <div v-for="(c, ci) in filters" :key="ci" class="fcol">
            <div v-for="f in c" :key="f[0]" class="f"><svg width="13" height="13" viewBox="0 0 13 13"><rect v-if="f[2]" width="13" height="13" rx="2.500" fill="#0560b8" /><path v-if="f[2]" d="M3.500 6.500l2.200 2.200 4-4" fill="none" stroke="#fff" stroke-width="1" /><rect v-else x=".5" y=".5" width="12" height="12" rx="2.500" fill="#f6f6f6" stroke="#666" /></svg><span v-fit="f[1]">{{ f[0] }}</span></div>
          </div>
        </div>
      </aside>
    </main>

    <section class="stats"><div v-for="s in stats" :key="s[0]" :style="{ width: s[3] + 'px' }"><span v-fit="s[2]">{{ s[0] }}</span><span class="v">{{ s[1] }}</span></div></section>
    <section class="status"><div v-for="s in status" :key="s[0]" :style="{ width: s[2] + 'px' }"><span v-fit="s[1]">{{ s[0] }}</span></div></section>

    <footer class="task">
      <svg class="start" width="23" height="23" viewBox="0 0 23 23"><defs><linearGradient id="wn" x1="0" y1="0" x2="1" y2="1"><stop offset="0" stop-color="#4fc3f3" /><stop offset="1" stop-color="#0a78d0" /></linearGradient></defs><path d="M0 0h11v11H0zM12 0h11v11H12zM0 12h11v11H0zM12 12h11v11H12z" fill="url(#wn)" /></svg>
      <div class="search"><svg width="16" height="16" viewBox="0 0 16 16" fill="none" stroke="#333" stroke-width="1.500"><circle cx="9" cy="6.500" r="5.500" /><path d="M5 10.500L.8 15" /></svg><span v-fit="41">Search</span></div>
      <span v-for="(t, i) in tasks" :key="i" class="app-ic"><svg width="24" height="24" viewBox="0 0 24 24" v-html="t.s" /><i v-if="t.d" :class="{ wide: t.d === 2 }" /></span>
      <div class="clock"><span v-fit="43">6:21 PM</span><span v-fit="49">6/9/2025</span></div>
    </footer>
  </div>
</template>

<style>
body { margin: 0; overflow: hidden; }
</style>

<style scoped>
.app { width: 1918px; height: 1078px; display: flex; flex-direction: column; background: #f0f0f0; color: #111; font: 11.6px/14px "Open Sans", "Noto Sans", sans-serif; overflow: hidden; white-space: pre; }
.app * { box-sizing: border-box; }
span, em { display: inline-block; font-style: normal; flex: none; }
svg { flex: none; display: block; overflow: visible; }
.title { height: 23px; background: #f2f2f2; display: flex; align-items: center; padding-left: 2px; gap: 6px; color: #8a8a8a; }
.win { margin-left: auto; margin-right: 18px; }
.menu { height: 18px; background: #fff; display: flex; align-items: center; gap: 14px; padding: 1px 0 0 7px; color: #606060; }
.menu u { text-underline-offset: 2px; text-decoration-thickness: 1px; }
.tb1 { height: 36px; display: flex; align-items: center; padding: 2px 0 0 4px; }
.slot { width: 32px; display: flex; justify-content: center; }
.sep { width: 8px; height: 26px; flex: none; display: flex; justify-content: center; }
.sep::before { content: ""; width: 1px; background: #8c8c8c; }
.tb2 { height: 34px; background: #dadada; border-bottom: 1px solid #a6a6a6; display: flex; }
.tools { width: 910px; height: 33px; background: #f0f0f0; display: flex; align-items: center; padding-left: 5px; flex: none; }
.combo { height: 23px; background: #fdfdfd; border: 1px solid #d0d0d0; border-bottom-color: #b8b8b8; border-radius: 2px; display: flex; align-items: center; padding: 0 3px; flex: none; }
.chev { width: 9px; height: 6px; margin-left: auto; margin-right: 1px; }
.chev path { fill: none; stroke: #666; stroke-width: 1.1; }
.c1 { width: 178px; }
.act { width: 30px; height: 30px; margin-left: 2px; background: #b3d6f3; border: 1px solid #0078d4; display: flex; align-items: center; justify-content: center; }
.vs { width: 1px; height: 26px; background: #8c8c8c; flex: none; }
.s1 { margin: 0 5px 0 4px; }
.c2 { width: 253px; }
.s2 { margin: 0 5px 0 4px; }
.c3 { width: 120px; height: 22px; border-color: #777; padding-left: 6px; }
.sw { width: 14px; height: 14px; background: #c83434; border: 1px solid #000; margin-right: 5px; flex: none; }
.pair { margin-left: 5px; }
.s3 { margin: 0 5px 0 7px; }
.c4 { width: 149px; }
.s4 { margin: 0 5px 0 4px; }
.c5 { width: 96px; }
.mid { height: 867px; display: flex; }
.bar { display: flex; flex-direction: column; flex: none; padding-top: 4px; }
.left { width: 35px; border-right: 1px solid #a6a6a6; }
.cell { width: 30px; height: 30px; margin: 1px 2px; display: flex; align-items: center; justify-content: center; border: 1px solid transparent; position: relative; }
.cell.active { background: #b3d6f3; border-color: #0078d4; }
.cell.sub::after { content: ""; position: absolute; right: -1px; bottom: -1px; width: 7px; height: 7px; background: #000; clip-path: polygon(100% 0, 100% 100%, 0 100%); }
.hs { height: 8px; flex: none; display: flex; align-items: center; margin: 0 4px; }
.hs::before { content: ""; width: 26px; height: 1px; background: #8c8c8c; }
.board { margin-top: 1px; overflow: hidden; font-family: "DejaVu Sans", sans-serif; }
.right { width: 35px; border-left: 1px solid #a6a6a6; }
.panel { width: 253px; border-left: 5px solid #dadada; flex: none; display: flex; flex-direction: column; }
h2 { margin: 0; height: 26px; background: #bababa; font: inherit; font-size: 12px; display: flex; align-items: center; padding-left: 3px; flex: none; }
.tabs { height: 27px; display: flex; align-items: flex-end; padding-left: 1px; flex: none; }
.tab { height: 20px; border: 1px solid #e2e2e2; border-width: 1px 1px 0 0; padding: 2px 5px 0; }
.tab.on { height: 22px; width: 50px; background: #f9f9f9; border-width: 1px 1px 0; padding: 3px 6px 0; }
.tab.t2 { width: 51px; }
.tab.t3 { width: 46px; padding-left: 6px; }
.box { height: 584px; background: #f9f9f9; border: 1px solid #e2e2e2; border-left-color: #ececec; padding: 2px 1px 0 3px; flex: none; }
ul { margin: 0; padding: 0; list-style: none; height: 555px; background: #f0f0f0; }
li { height: 18px; display: flex; align-items: center; padding-right: 4px; }
li.sel { background: #e1e1e1; }
.swatch { margin-right: 6px; }
li span { margin-left: 5px; }
.ldo { margin: 4px 4px 0 5px; height: 18px; background: #fff; display: flex; align-items: center; padding: 0 0 2px 6px; gap: 2px; color: #666; }
.presets { height: 100px; padding: 12px 5px 0 7px; display: flex; flex-direction: column; flex: none; }
label { height: 16px; display: flex; }
.l2 { margin-top: 4px; height: 16px; }
.h2b { border-top: 5px solid #dadada; height: 31px; }
.filters { padding: 5px 0 0 5px; display: flex; flex: 1; }
.fcol { width: 92px; }
.f { height: 15px; display: flex; align-items: center; gap: 3px; }
.stats { height: 32px; border-top: 1px solid #d8d8d8; border-bottom: 1px solid #d5d5d5; display: flex; padding-left: 11px; color: #6c6c6c; flex: none; line-height: 14.5px; }
.stats div { display: flex; flex-direction: column; align-items: flex-start; padding-top: 1px; flex: none; font-size: 11.3px; }
.v { letter-spacing: -.4px; }
.status { height: 23px; border-bottom: 1px solid #b8b8b8; display: flex; align-items: center; flex: none; }
.status div { flex: none; height: 20px; border-right: 1px solid #d5d5d5; display: flex; align-items: center; padding: 2px 0 0 5px; }
.status div:first-child { padding-left: 2px; }
.task { flex: 1; background: #efefef; display: flex; align-items: center; padding-left: 21px; }
.start { margin-top: 2px; }
.search { width: 218px; height: 32px; margin: 0 3px 0 14px; border-radius: 16px; background: #fbfbfb; border: 1px solid #dcdcdc; display: flex; align-items: center; padding-left: 9px; gap: 9px; font-size: 13px; color: #666; }
.app-ic { width: 44px; height: 45px; display: flex; align-items: center; justify-content: center; position: relative; padding-top: 1px; }
.app-ic i { position: absolute; bottom: 3px; width: 6px; height: 3px; border-radius: 2px; background: #868686; }
.app-ic i.wide { width: 14px; }
.clock { margin-left: auto; margin-right: 21px; display: flex; flex-direction: column; align-items: flex-end; line-height: 16px; color: #5c5c5c; }
</style>
